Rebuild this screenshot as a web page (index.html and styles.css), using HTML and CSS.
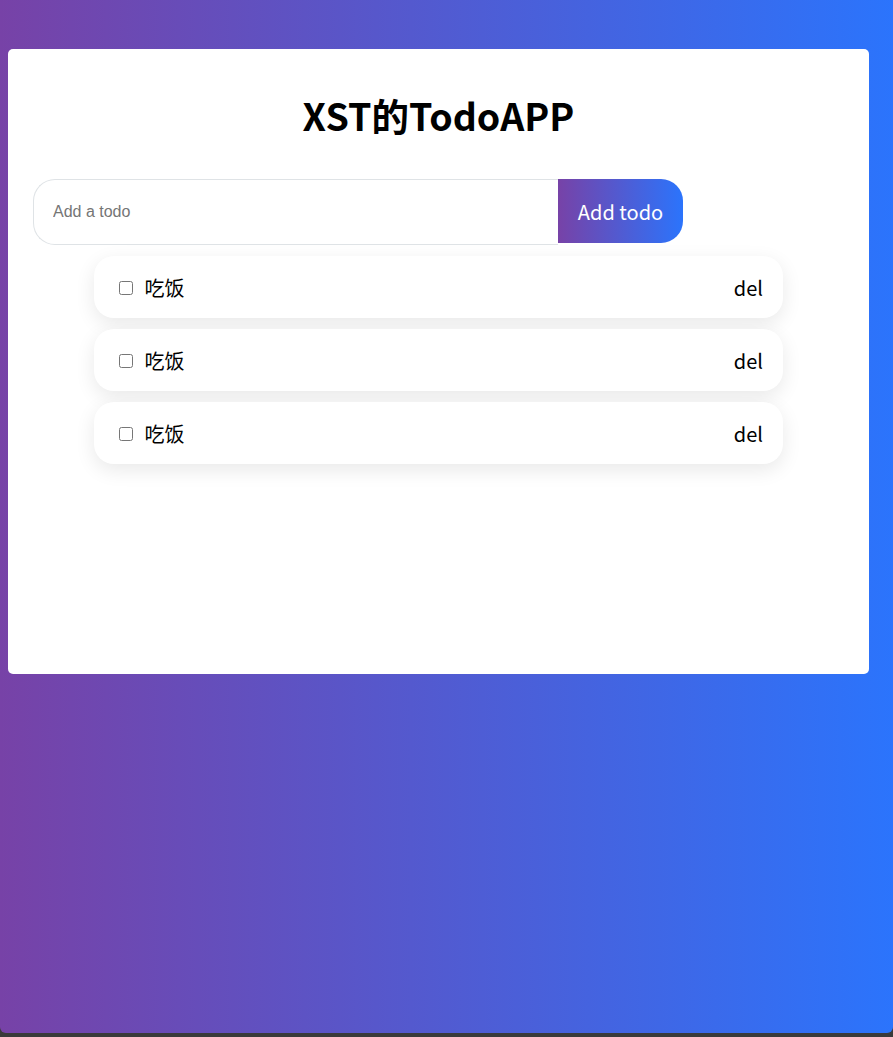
FILE: index.html
```html
<!DOCTYPE html>
<html lang="zh">
<head>
    <meta charset="UTF-8">
    <meta name="viewport" content="width=device-width, initial-scale=1.0">
    <title>XST的TodoAPP</title>
    <link rel="stylesheet" href="styles.css">
</head>
<body>
    <div class="app">
        <h1 class="title">XST的TodoAPP</h1>
        <form class="add-form">
            <input class="add-input" type="text" placeholder="Add a todo">
            <button class="add-btn" type="button">Add todo</button>
        </form>
        <ul class="todo-list">
            <li class="todo-item">
                <label class="todo-label"><input type="checkbox"> 吃饭</label>
                <span class="del">del</span>
            </li>
            <li class="todo-item">
                <label class="todo-label"><input type="checkbox"> 吃饭</label>
                <span class="del">del</span>
            </li>
            <li class="todo-item">
                <label class="todo-label"><input type="checkbox"> 吃饭</label>
                <span class="del">del</span>
            </li>
        </ul>
    </div>
</body>
</html>
```

FILE: styles.css
```css
html {
    background: #3a3a3a;
}

body {
    margin: 0;
    height: 1033px;
    border-radius: 0 0 6px 6px;
    background: linear-gradient(to right, #7742a7, #2b74fc);
    font-family: "Noto Sans CJK SC", "Noto Sans", sans-serif;
    overflow: hidden;
}

.app {
    margin: 49px 24px 0 8px;
    height: 625px;
    box-sizing: border-box;
    padding: 36px 25px 0;
    background: #fff;
    border-radius: 5px;
}

.title {
    margin: 0 0 34px;
    text-align: center;
    font-size: 37.5px;
    line-height: 60px;
    font-weight: 700;
    color: #000;
}

.add-form {
    display: flex;
    width: 650px;
    margin: 0;
}

.add-input {
    width: 525px;
    height: 66px;
    box-sizing: border-box;
    padding: 0 19px;
    border: 1px solid #dfe3e6;
    border-right: none;
    border-radius: 22px 0 0 22px;
    font-family: "Liberation Sans", Arial, sans-serif;
    font-size: 16px;
    outline: none;
}

.add-input::placeholder {
    color: #757575;
}

.add-btn {
    width: 125px;
    height: 64px;
    border: none;
    border-radius: 0 22px 22px 0;
    background: linear-gradient(to right, #7742a7, #2b74fc);
    color: #fff;
    font-family: "Noto Sans CJK SC", "Noto Sans", sans-serif;
    font-size: 20px;
    cursor: pointer;
}

.todo-list {
    list-style: none;
    width: 689px;
    margin: 11px auto 0;
    padding: 0;
    display: flex;
    flex-direction: column;
    gap: 11px;
}

.todo-item {
    display: flex;
    justify-content: space-between;
    align-items: center;
    height: 62px;
    padding: 0 20px 0 21px;
    background: #fff;
    border-radius: 20px;
    box-shadow: 0 6px 20px rgba(0, 0, 0, 0.09);
    font-size: 20px;
    color: #000;
}

.todo-label input {
    width: 14px;
    height: 14px;
    margin: 0 7px 0 4px;
    vertical-align: 1px;
}

.del {
    cursor: pointer;
}
```
